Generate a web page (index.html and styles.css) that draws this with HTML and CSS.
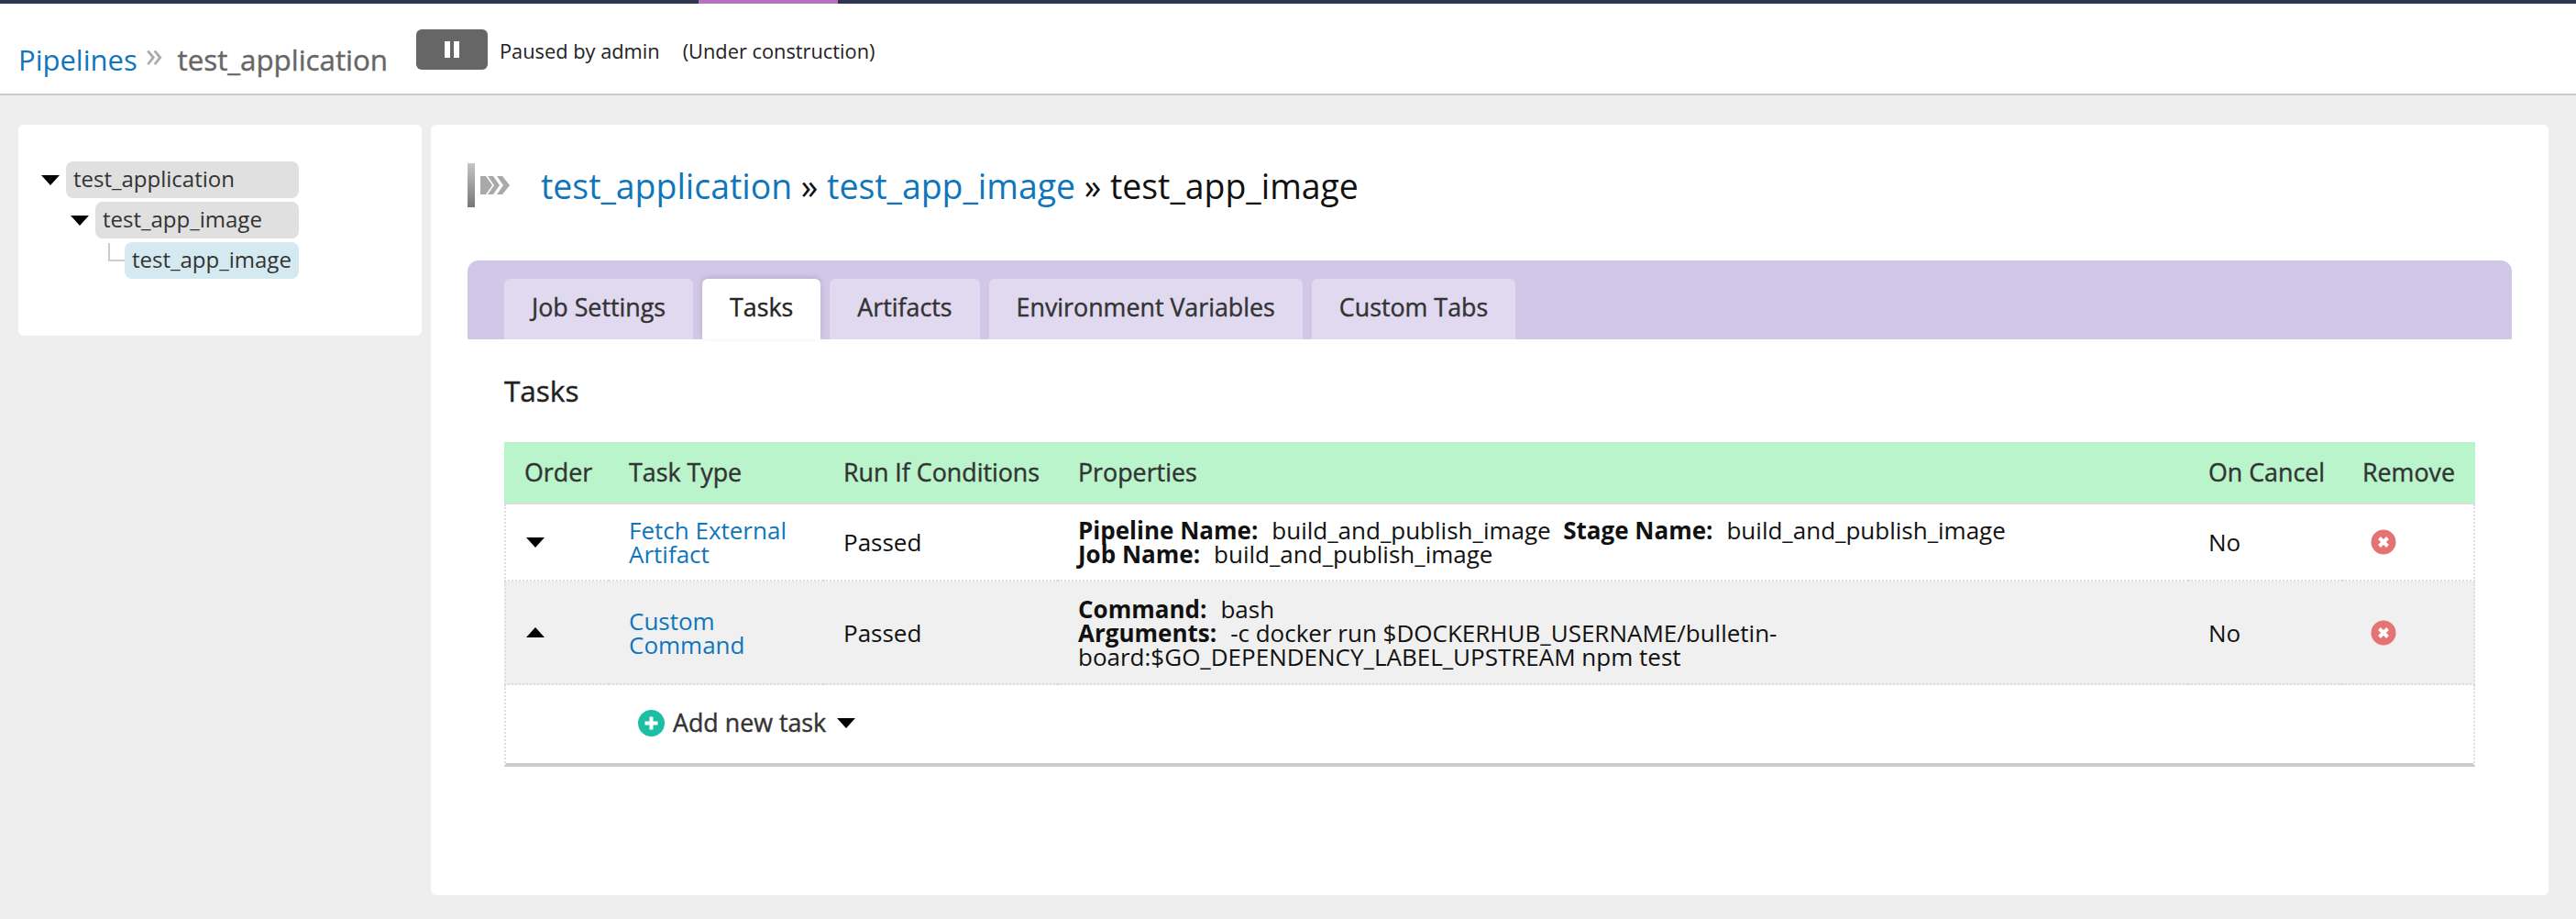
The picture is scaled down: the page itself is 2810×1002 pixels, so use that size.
FILE: index.html
```html
<!DOCTYPE html>
<html lang="en">
<head>
<meta charset="utf-8">
<title>test_app_image</title>
<link rel="stylesheet" href="styles.css">
</head>
<body>
<div class="topbar"><span class="topbar-active"></span></div>
<header class="header">
  <div class="crumbs">
    <a class="link" href="#">Pipelines</a>
    <span class="crumb-sep">»</span>
    <span class="crumb-current">test_application</span>
  </div>
  <button class="pause" type="button" aria-label="Pause"><span class="pause-bar"></span><span class="pause-bar"></span></button>
  <div class="pause-info"><span>Paused by admin</span><span>(Under construction)</span></div>
</header>
<main class="main">
  <aside class="side">
    <ul class="tree">
      <li class="tree-row tree-l1"><span class="caret caret-down"></span><span class="pill">test_application</span></li>
      <li class="tree-row tree-l2"><span class="caret caret-down"></span><span class="pill">test_app_image</span></li>
      <li class="tree-row tree-l3"><span class="elbow"></span><span class="pill pill-active">test_app_image</span></li>
    </ul>
  </aside>
  <section class="content">
    <h1 class="title">
      <svg class="job-icon" width="50" height="50" viewBox="0 0 50 50" aria-hidden="true">
        <defs><linearGradient id="g" x1="0" y1="0" x2="0" y2="1"><stop offset="0" stop-color="#c4c4c4"/><stop offset="1" stop-color="#777"/></linearGradient></defs>
        <rect x="0" y="0" width="8" height="48" fill="url(#g)"/>
        <path d="M14 14h6l7 10-7 10h-6z M22 14h6l7 10-7 10h-6l7-10z M32 14h6l8 10-8 10h-6l7-10z" fill="#a9a9a9"/>
      </svg>
      <span class="title-text"><a class="link" href="#">test_application</a> » <a class="link" href="#">test_app_image</a> » test_app_image</span>
    </h1>
    <nav class="tabs">
      <a class="tab" href="#">Job Settings</a>
      <a class="tab tab-active" href="#">Tasks</a>
      <a class="tab" href="#">Artifacts</a>
      <a class="tab" href="#">Environment Variables</a>
      <a class="tab" href="#">Custom Tabs</a>
    </nav>
    <div class="panel">
      <h2 class="panel-title">Tasks</h2>
      <table class="tasks">
        <colgroup>
          <col class="c-order"><col class="c-type"><col class="c-run"><col class="c-props"><col class="c-cancel"><col class="c-remove">
        </colgroup>
        <thead>
          <tr><th>Order</th><th>Task Type</th><th>Run If Conditions</th><th>Properties</th><th>On Cancel</th><th>Remove</th></tr>
        </thead>
        <tbody>
          <tr class="row row-1">
            <td><span class="caret caret-down caret-row"></span></td>
            <td><a class="link" href="#">Fetch External Artifact</a></td>
            <td>Passed</td>
            <td><b>Pipeline Name:</b>&nbsp; build_and_publish_image &nbsp;<b>Stage Name:</b>&nbsp; build_and_publish_image<br><b>Job Name:</b>&nbsp; build_and_publish_image</td>
            <td>No</td>
            <td><svg class="remove" width="28" height="28" viewBox="0 0 28 28" aria-label="Remove"><circle cx="14" cy="14" r="13.5" fill="#e57373"/><path d="M9.5 9.5l9 9M18.5 9.5l-9 9" stroke="#fff" stroke-width="4"/></svg></td>
          </tr>
          <tr class="row row-2">
            <td><span class="caret caret-up caret-row"></span></td>
            <td><a class="link" href="#">Custom Command</a></td>
            <td>Passed</td>
            <td><b>Command:</b>&nbsp; bash<br><b>Arguments:</b>&nbsp; -c docker run $DOCKERHUB_USERNAME/bulletin-<br>board:$GO_DEPENDENCY_LABEL_UPSTREAM npm test</td>
            <td>No</td>
            <td><svg class="remove" width="28" height="28" viewBox="0 0 28 28" aria-label="Remove"><circle cx="14" cy="14" r="13.5" fill="#e57373"/><path d="M9.5 9.5l9 9M18.5 9.5l-9 9" stroke="#fff" stroke-width="4"/></svg></td>
          </tr>
        </tbody>
        <tfoot>
          <tr>
            <td colspan="6">
              <a class="add" href="#">
                <svg width="29" height="29" viewBox="0 0 29 29" aria-hidden="true"><circle cx="14.5" cy="14.5" r="14.5" fill="#1cbfa5"/><path d="M14.5 7.5v14M7.5 14.5h14" stroke="#fff" stroke-width="4"/></svg>
                <span>Add new task</span>
                <span class="caret caret-down"></span>
              </a>
            </td>
          </tr>
        </tfoot>
      </table>
    </div>
  </section>
</main>
</body>
</html>
```

FILE: styles.css
```css
* { box-sizing: border-box; }
html, body { margin: 0; padding: 0; }
body {
  width: 2810px;
  height: 1002px;
  overflow: hidden;
  background: #eee;
  font-family: "Open Sans", "Noto Sans", sans-serif;
  font-size: 24px;
  line-height: 26px;
  color: #111;
}
a { text-decoration: none; }
.link { color: #0f75bc; }

.topbar { height: 4px; background: #2f3650; padding-left: 762px; }
.topbar-active { display: block; width: 152px; height: 4px; background: #b771bd; }

.header {
  display: flex;
  align-items: flex-start;
  height: 100px;
  background: #fff;
  border-bottom: 2px solid #ccc;
  padding: 28px 0 0 20px;
}
.crumbs { display: flex; align-items: baseline; font-size: 31px; line-height: 40px; margin-top: 10px; width: 434px; }
.crumb-sep { color: #aaa; font-size: 38px; margin: 0 16px 0 9px; position: relative; top: -4px; }
.crumb-current { color: #666; font-size: 31.3px; -webkit-text-stroke: .4px #666; }
.pause {
  display: flex;
  justify-content: center;
  align-items: center;
  gap: 4px;
  width: 78px;
  height: 44px;
  padding: 0;
  border: 0;
  border-radius: 6px;
  background: #666;
}
.pause-bar { width: 6px; height: 18px; background: #fff; }
.pause-info { display: flex; gap: 25px; font-size: 21.8px; line-height: 32px; margin: 8px 0 0 13px; color: #222; }

.main { display: flex; gap: 10px; padding: 32px 30px 0 20px; align-items: flex-start; }
.side { width: 440px; height: 230px; background: #fff; border-radius: 6px; padding-top: 40px; }
.tree { list-style: none; margin: 0; padding: 0; }
.tree-row { display: flex; align-items: center; height: 40px; margin-bottom: 4px; color: #333; }
.tree-l1 { padding-left: 25px; }
.tree-l2 { padding-left: 57px; }
.tree-l3 { padding-left: 98px; }
.pill {
  display: block;
  height: 40px;
  line-height: 38px;
  padding: 0 8px;
  background: #e0e0e0;
  border-radius: 8px;
  font-size: 24px;
}
.tree-l1 .pill { width: 254px; margin-left: 7px; }
.tree-l2 .pill { width: 222px; margin-left: 7px; }
.tree-l3 .pill { width: 190px; }
.pill-active { background: #d5eaf0; }
.elbow { width: 20px; height: 20px; margin: -18px -2px 0 0; border-left: 2px solid #ccc; border-bottom: 2px solid #ccc; }

.caret { display: inline-block; width: 0; height: 0; border-left: 10px solid transparent; border-right: 10px solid transparent; }
.caret-down { border-top: 11px solid #000; }
.caret-up { border-bottom: 11px solid #000; }
.caret-row { display: block; }

.content { flex: 1; height: 840px; background: #fff; border-radius: 6px; padding: 40px 40px 0; }
.title {
  display: flex;
  align-items: center;
  gap: 30px;
  height: 54px;
  margin: 0 0 54px;
  font-size: 37.4px;
  line-height: 54px;
  font-weight: 400;
  color: #111;
}
.job-icon { flex: none; }
.tabs {
  display: flex;
  gap: 10px;
  height: 86px;
  padding: 20px 40px 0;
  background: #d2c7e7;
  border-radius: 12px 12px 0 0;
}
.tab {
  display: block;
  height: 66px;
  padding: 0 30px;
  line-height: 62px;
  background: #e0d9ef;
  border-radius: 6px 6px 0 0;
  color: #333;
  font-size: 26.8px;
  -webkit-text-stroke: .4px #333;
}
.tab-active { background: #fff; color: #222; box-shadow: 0 -2px 6px rgba(0,0,0,.12); }

.panel { padding: 0 40px; }
.panel-title { margin: 37px 0 37px; font-size: 31.5px; line-height: 38px; font-weight: 400; color: #222; -webkit-text-stroke: .4px #222; }
.tasks { width: 2150px; table-layout: fixed; border-collapse: separate; border-spacing: 0; font-size: 26px; }
.tasks b { margin-right: 1.5px; }
.c-order { width: 114px; }
.c-type { width: 234px; }
.c-run { width: 256px; }
.c-props { width: 1233px; }
.c-cancel { width: 168px; }
.c-remove { width: 145px; }
.tasks th {
  height: 68px;
  padding: 0 0 0 22px;
  background: #b9f4cb;
  border-bottom: 2px solid #ddd;
  text-align: left;
  font-size: 26.8px;
  font-weight: 400;
  color: #333;
  -webkit-text-stroke: .4px #333;
}
.tasks tbody td { padding: 0 22px; vertical-align: middle; border-bottom: 2px dotted #ddd; }
.row-1 td { height: 84px; }
.row-2 td { height: 113px; background: #f0f0f0; }
.tasks td:first-child { border-left: 2px dotted #ddd; }
.tasks td:last-child { border-right: 2px dotted #ddd; }
.tasks tbody td:last-child { padding-left: 31px; }
.tasks tfoot td { height: 89px; padding: 0 0 0 144px; border-bottom: 4px solid #ccc; vertical-align: middle; }
.add { display: inline-flex; align-items: center; color: #333; font-size: 26.8px; -webkit-text-stroke: .4px #333; }
.add svg { margin-right: 9px; }
.add .caret { margin-left: 12px; }
.remove { display: block; }
```
